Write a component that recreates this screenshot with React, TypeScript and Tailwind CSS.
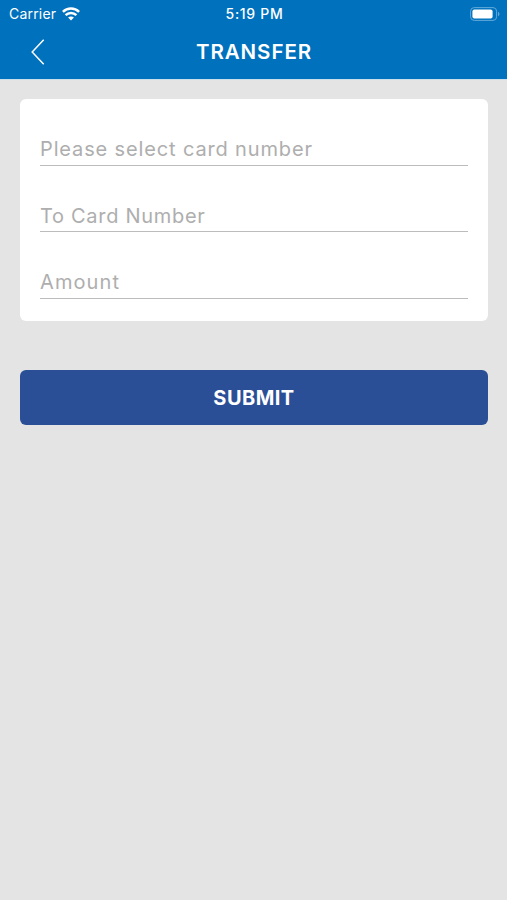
import React from 'react';

interface FieldProps {
  label: string;
}

const fields = ['Please select card number', 'To Card Number', 'Amount'];

const tracking: Record<string, string> = {
  'Please select card number': 'tracking-[0.86px]',
  'To Card Number': 'tracking-[0.7px]',
  'Amount': 'tracking-[1.1px]',
};

const WifiIcon = () => (
  <svg className="w-[18px] h-[14px]" viewBox="0 0 18 14" fill="none" stroke="#fff" strokeWidth="2.5">
    <path d="M0.9 4.9C5.4 0.5 12.6 0.5 17.1 4.9" />
    <path d="M3.6 8.2C6.6 5.3 11.4 5.3 14.4 8.2" />
    <path d="M6.1 10.6C7.7 9 10.3 9 11.9 10.6L9 13.6Z" fill="#fff" stroke="none" />
  </svg>
);

const BatteryIcon = () => (
  <svg className="w-[30px] h-[14px]" viewBox="0 0 30 14" fill="none">
    <rect x="0.6" y="0.6" width="26" height="12.8" rx="3.6" stroke="#62a9da" strokeWidth="1" />
    <rect x="2.4" y="2.4" width="20.2" height="9.2" rx="2" fill="#fff" />
    <path d="M28 4.8C30 5.6 30 8.4 28 9.2Z" fill="#62a9da" />
  </svg>
);

const StatusBar = () => (
  <div className="grid grid-cols-3 items-center h-[27px] pl-[9px] pr-[7px] text-white text-[14px] leading-none">
    <div className="flex items-center gap-1.5">
      <span className="font-normal tracking-[0.2px]">Carrier</span>
      <WifiIcon />
    </div>
    <span className="text-center font-medium tracking-[0.7px]">5:19 PM</span>
    <div className="flex justify-end">
      <BatteryIcon />
    </div>
  </div>
);

const Field: React.FC<FieldProps> = ({ label }) => (
  <button className={`block w-full h-[66.5px] pt-[38px] pb-[3px] border-b border-[#bcbcbc] text-left text-[20px] leading-[24px] text-[#aeaeae] whitespace-nowrap ${tracking[label]}`}>
    {label}
  </button>
);

const App: React.FC = () => {
  return (
    <div className="min-h-screen bg-[#e4e4e4] font-['Inter',sans-serif]">
      <header className="h-[79px] bg-[#0071bc]">
        <StatusBar />
        <div className="grid grid-cols-[60px_1fr_60px] items-center h-[50px]">
          <button className="pl-[31px]" aria-label="Back">
            <svg className="w-[14px] h-[26px]" viewBox="0 0 14 26" fill="none" stroke="#fff" strokeWidth="1.5">
              <path d="M12.7 0.8L1.2 13L12.7 25.2" />
            </svg>
          </button>
          <h1 className="pl-px text-center text-white text-[20.5px] font-semibold tracking-[0.95px]">TRANSFER</h1>
        </div>
      </header>
      <div className="h-px bg-[#c9dfec]" />

      <main className="pl-5 pr-[19px] pt-[19px]">
        <section className="h-[222px] bg-white rounded-md px-5">
          {fields.map((label) => (
            <Field key={label} label={label} />
          ))}
        </section>

        <button className="w-full h-[55px] mt-[49px] rounded-md bg-[#2b4f96] text-white text-[20px] font-bold tracking-[0.45px]">
          SUBMIT
        </button>
      </main>
    </div>
  );
};

export default App;
